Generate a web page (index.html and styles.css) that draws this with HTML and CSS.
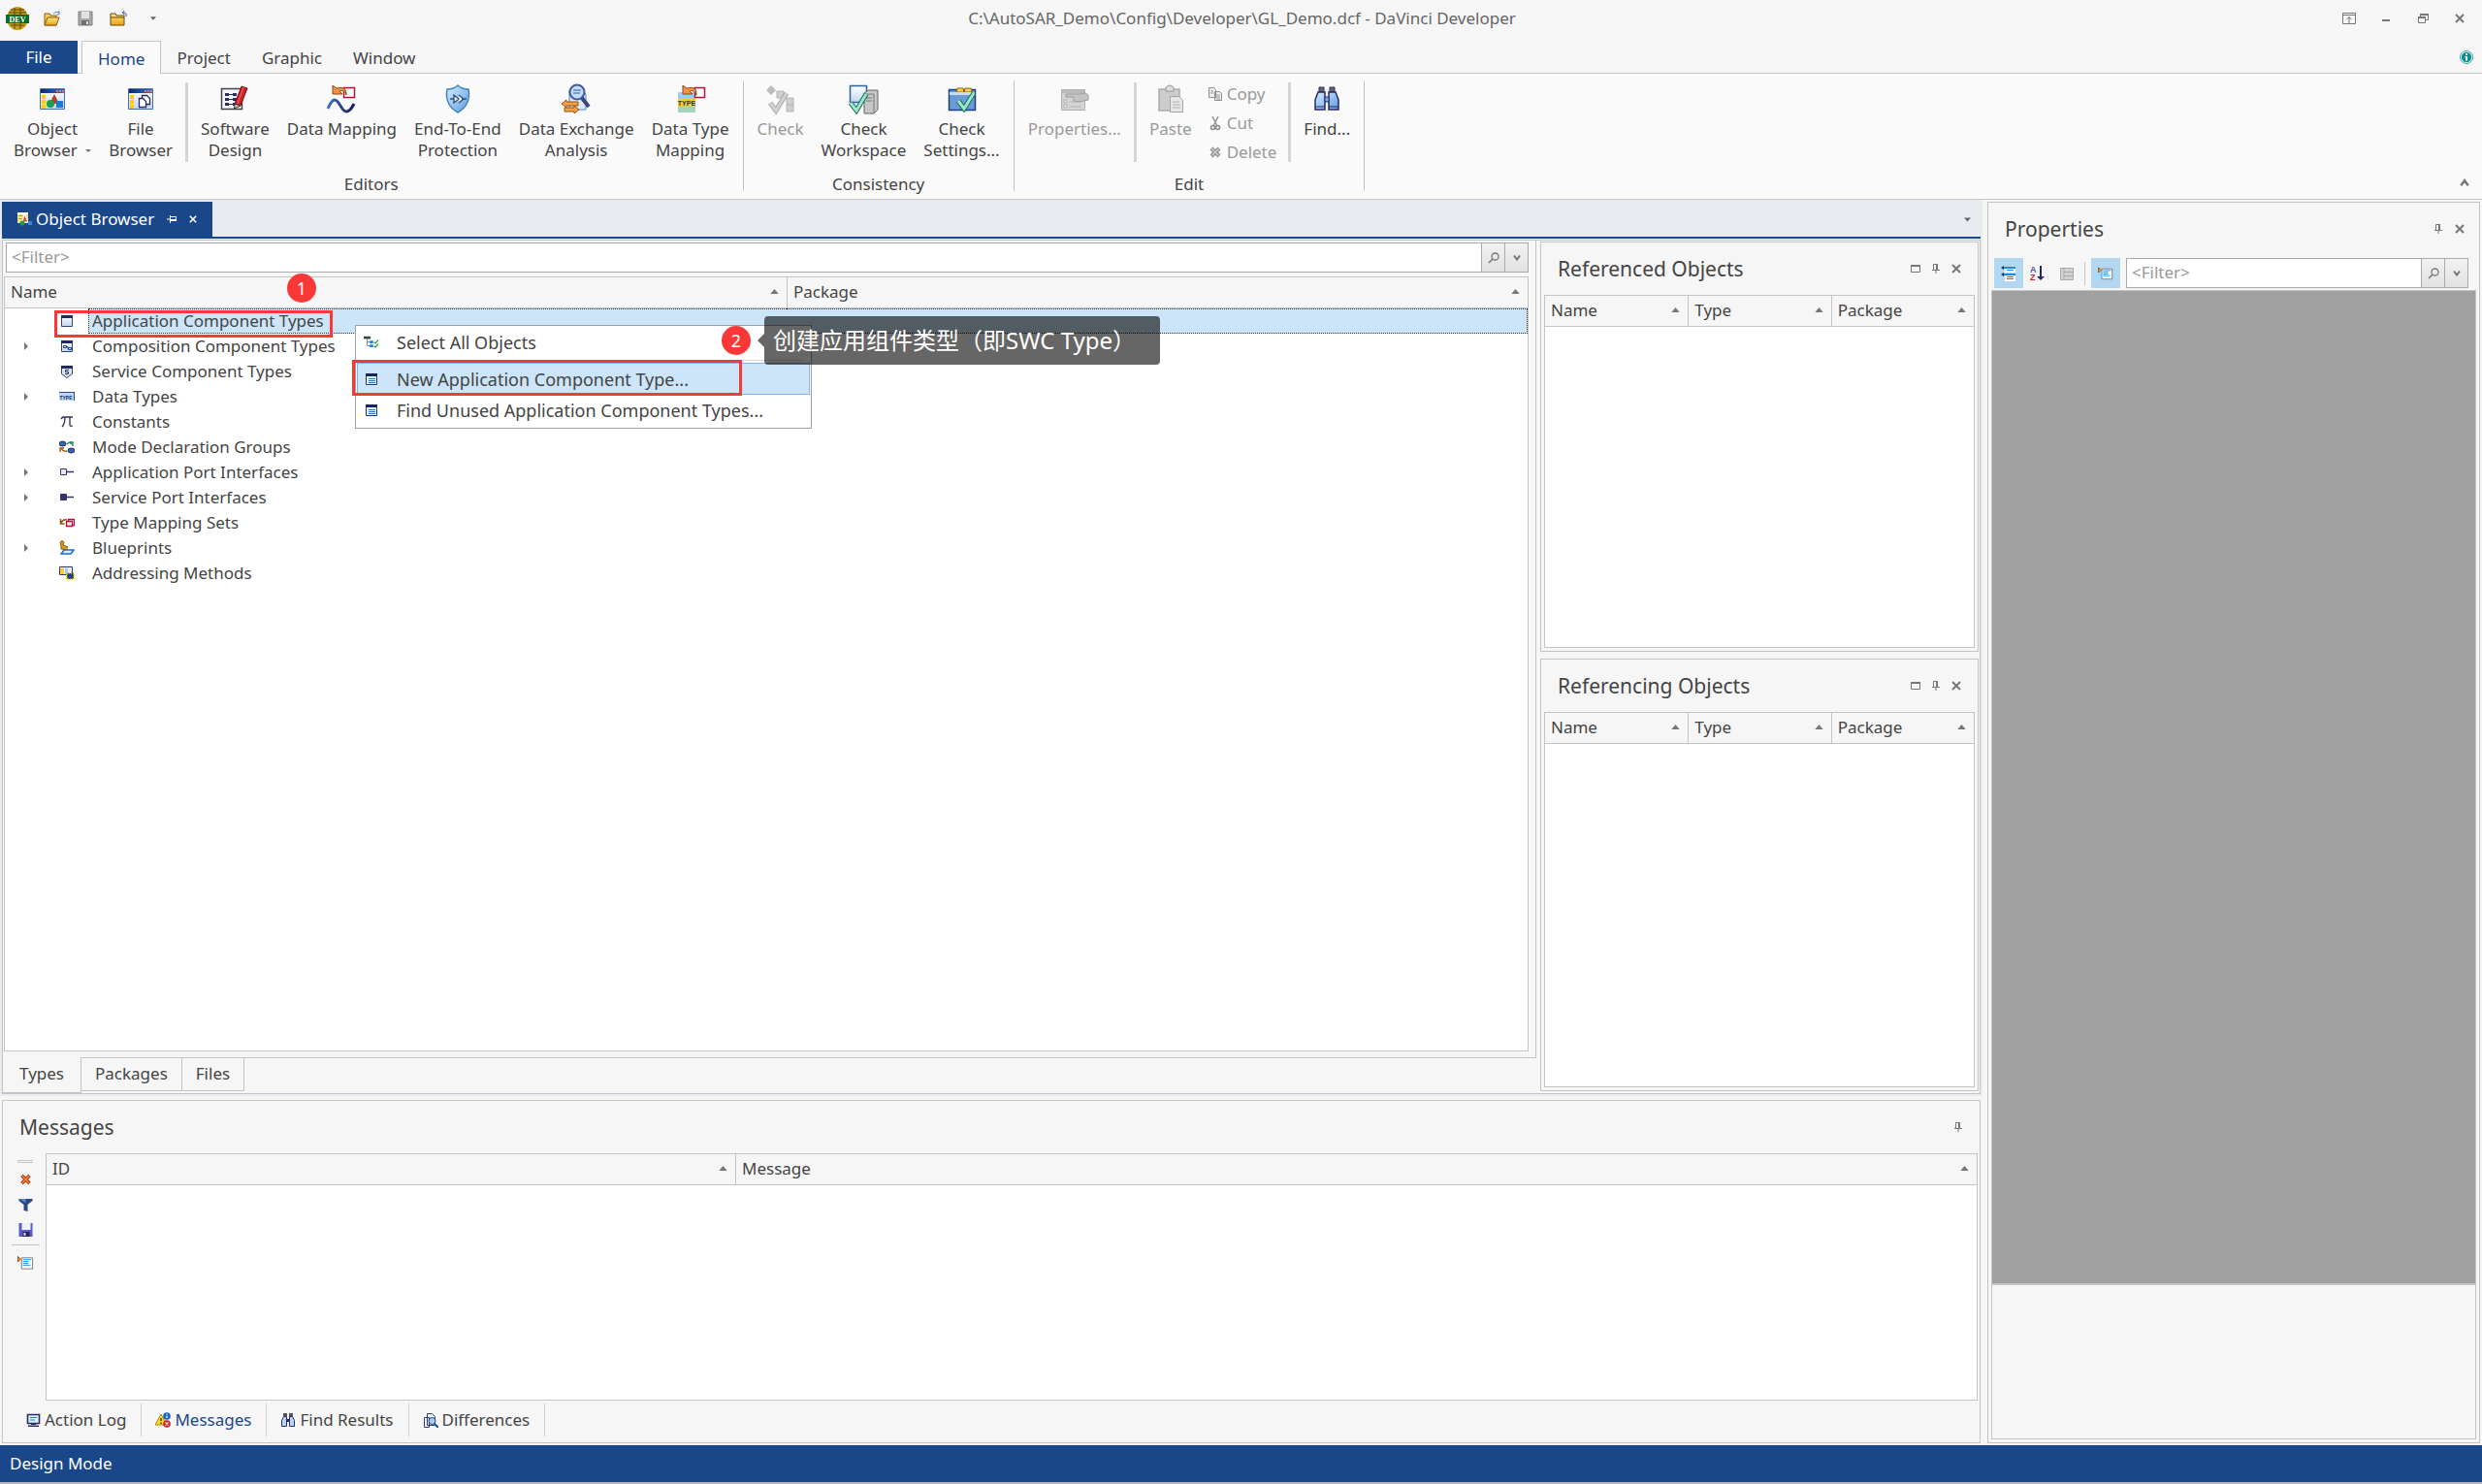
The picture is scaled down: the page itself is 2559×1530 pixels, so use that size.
FILE: index.html
```html
<!DOCTYPE html>
<html lang="en">

<head>
  <meta charset="utf-8">
  <meta name="viewport" content="width=device-width, initial-scale=1">
  <title>GL_Demo.dcf - DaVinci Developer</title>
  <link rel="stylesheet" href="styles.css">
</head>
<body>
  <svg class="sprite" aria-hidden="true">
    <defs>
      <linearGradient id="g-win" x1="0" y1="0" x2="0" y2="1"><stop offset="0" stop-color="#fff"/><stop offset="1" stop-color="#c4d4ee"/></linearGradient>
      <linearGradient id="g-bar" x1="0" y1="0" x2="1" y2="0"><stop offset="0" stop-color="#12256e"/><stop offset="1" stop-color="#2f74c8"/></linearGradient>
      <linearGradient id="g-gold" x1="0" y1="0" x2="0" y2="1"><stop offset="0" stop-color="#ffe48a"/><stop offset="1" stop-color="#e8a413"/></linearGradient>
      <linearGradient id="g-blue" x1="0" y1="0" x2="1" y2="1"><stop offset="0" stop-color="#d6ecff"/><stop offset="1" stop-color="#5e9be0"/></linearGradient>
      <linearGradient id="g-wave" x1="0" y1="0" x2="1" y2="0"><stop offset="0" stop-color="#3f6fc0"/><stop offset="1" stop-color="#1d1d5c"/></linearGradient>
    </defs>
    <symbol id="i-tri-up" viewBox="0 0 10 6"><path d="M5 0l5 6H0z" fill="#777"/></symbol>
    <symbol id="i-tri-down" viewBox="0 0 10 6"><path d="M0 0h10L5 6z" fill="#666"/></symbol>
    <symbol id="i-x" viewBox="0 0 10 10"><path d="M1 1l8 8M9 1L1 9" stroke="currentColor" stroke-width="2"/></symbol>
    <symbol id="i-pin" viewBox="0 0 8 10"><path d="M1.500 6V.500h4V6M0 6.500h8M4 7v3" stroke="currentColor" fill="none"/><path d="M4 0h2v6H4z" fill="currentColor"/></symbol>
    <symbol id="i-max" viewBox="0 0 10 10"><path d="M.500 1.500h9v7h-9z" fill="none" stroke="currentColor"/><path d="M0 1h10v2H0z" fill="currentColor"/></symbol>
    <symbol id="i-search" viewBox="0 0 12 12"><circle cx="7.500" cy="4.500" r="3.500" fill="none" stroke="#777" stroke-width="1.300"/><path d="M5 7L1 11" stroke="#777" stroke-width="1.600"/></symbol>
    <symbol id="i-chev" viewBox="0 0 8 8"><path d="M1 1.500l3 4 3-4" fill="none" stroke="#777" stroke-width="2"/></symbol>

    <symbol id="i-open" viewBox="0 0 18 16"><path d="M1 15V3h5l1 2h6v10z" fill="#f7cf5c" stroke="#8a5a12"/><path d="M1 15L4 7h12l-3 8z" fill="url(#g-gold)" stroke="#8a5a12"/><path d="M10 3q3-3 6-1M16 0v4h-3" fill="none" stroke="#5b84b8"/></symbol>
    <symbol id="i-save-gray" viewBox="0 0 16 16"><path d="M1 1h14v14H1z" fill="#a9a9a9" stroke="#7e7e7e"/><path d="M4 1h8v7H4z" fill="#e2e2e2"/><path d="M4 10h8v5H4z" fill="#6f6f6f"/><path d="M9 11h2v3H9z" fill="#ddd"/></symbol>
    <symbol id="i-up" viewBox="0 0 18 16"><path d="M1 15V3h5l1 2h8v10z" fill="url(#g-gold)" stroke="#6b4a10"/><path d="M1 7h14" stroke="#6b4a10"/><path d="M17 6q1-4-3-4M15.500 0L13 2l2.500 2" fill="none" stroke="#3b5b96"/></symbol>
    <symbol id="i-ribbonmin" viewBox="0 0 14 12"><path d="M.500.500h13v11H.500zM0 2.500h14M7 11V4.500M4.500 7L7 4.500 9.500 7" fill="none" stroke="#777"/></symbol>
    <symbol id="i-min" viewBox="0 0 14 12"><path d="M3 7h8v2H3z" fill="#777"/></symbol>
    <symbol id="i-restore" viewBox="0 0 14 12"><path d="M4.500 4V1.500h8v6H10M2.500 4.500h7v6h-7z" fill="none" stroke="#777"/><path d="M4 1h9v2H4zM2 4h8v2H2z" fill="#777"/></symbol>
    <symbol id="i-info" viewBox="0 0 14 14"><circle cx="7" cy="7" r="6.500" fill="#fff" stroke="#35a3a3"/><circle cx="7" cy="7" r="5.200" fill="#0f8c8c"/><path d="M6 3h2v2H6zM5.500 6H8v4.500H6V7h-.500z" fill="#fff"/></symbol>

    <symbol id="i-objects" viewBox="0 0 32 32"><path d="M3.500 5.500h25v21h-25z" fill="url(#g-win)" stroke="#3f6fb5"/><path d="M4 6h24v4H4z" fill="url(#g-bar)"/><path d="M20 7h2v2h-2zM23 7h2v2h-2zM26 7h2v2h-2z" fill="#f0725c"/><path d="M5 12h4v4H5zM5 17h4v4H5zM5 22h4v4H5z" fill="#ffc90e"/><path d="M18 11l5 10H13z" fill="#c0392b"/><circle cx="14" cy="21" r="4" fill="#1e9e4a"/><path d="M20 18h7v7h-7z" fill="#2478d0"/></symbol>
    <symbol id="i-files" viewBox="0 0 32 32"><path d="M3.500 5.500h25v21h-25z" fill="url(#g-win)" stroke="#3f6fb5"/><path d="M4 6h24v4H4z" fill="url(#g-bar)"/><path d="M20 7h2v2h-2zM23 7h2v2h-2zM26 7h2v2h-2z" fill="#f0725c"/><path d="M5 12h4v4H5zM5 17h4v4H5zM5 22h4v4H5z" fill="#ffc90e"/><path d="M17.500 12.500h5l3 3v6h-8z" fill="#fff" stroke="#2c2c62" stroke-width="1.300"/><path d="M14.500 15.500h4l3 3v6h-7z" fill="#fff" stroke="#2c2c62" stroke-width="1.300"/></symbol>
    <symbol id="i-design" viewBox="0 0 32 32"><path d="M2.500 5.500h21v21h-21z" fill="#f2f5fa" stroke="#444" stroke-width="1.500"/><path d="M6 10h4v3H6zM6 15h4v3H6zM6 20h4v3H6zM14 10h4v3h-4zM14 15h4v3h-4zM14 20h4v3h-4zM10 11h4v1h-4zM10 16h4v1h-4zM10 21h4v1h-4z" fill="#2c2c62"/><path d="M16 21l7-18 6 2-7 18z" fill="#d3202b" stroke="#701016"/><path d="M25 4l-6 17" stroke="#f07070"/><path d="M15.500 26l.500-5 6 2z" fill="#e8c090" stroke="#333"/></symbol>
    <symbol id="i-mapping" viewBox="0 0 32 32"><path d="M18.500 4.500h11v10h-11z" fill="#fbfbfb" stroke="#b3123d" stroke-width="1.500"/><path d="M7 2v9h10l-3-3q5-2 7 4 1-10-10-7z" fill="#f0924a" stroke="#8e4a14"/><path d="M2 26q4-9 7-9c5 0 7 12 12 12q4 0 8-8" fill="none" stroke="url(#g-wave)" stroke-width="3"/></symbol>
    <symbol id="i-shield" viewBox="0 0 32 32"><path d="M16 2q4 4 11 4 3 16-11 24Q2 22 5 6q7 0 11-4z" fill="url(#g-blue)" stroke="#3f86b8" stroke-width="1.500"/><path d="M8 16h4M20 16h5M12 12l5 4-5 4zM17 12l5 4-5 4" fill="#fff" stroke="#2f4f7a" stroke-width="1.300"/></symbol>
    <symbol id="i-exchange" viewBox="0 0 32 32"><path d="M9 7h13l4 4v16H9z" fill="#dceaf8" stroke="#4f86c6"/><circle cx="17" cy="9" r="7.500" fill="#bfe0fa" stroke="#49579a" stroke-width="2"/><path d="M13 7h8M13 10h7" stroke="#49579a"/><path d="M22 15l7 9" stroke="#39477f" stroke-width="4"/><path d="M1 21l5-4v2h12v4H6v2z" fill="#f7a146" stroke="#96520e"/><path d="M19 27l-5-4v2H4v4h10v2z" fill="#f7a146" stroke="#96520e"/></symbol>
    <symbol id="i-check-gray" viewBox="0 0 32 32"><path d="M6 2l5 5-5 5-5-5z" fill="#bdbdbd"/><path d="M12 8h7v7h-7zM22 15h7v14h-7z" fill="#cfcfcf" stroke="#b5b5b5"/><path d="M22 22h7" stroke="#b5b5b5"/><path d="M5 20l6 8L22 10" fill="none" stroke="#a9a9a9" stroke-width="5"/><path d="M5 20l6 8L22 10" fill="none" stroke="#d2d2d2" stroke-width="3"/></symbol>
    <symbol id="i-check-ws" viewBox="0 0 32 32"><path d="M2.500 2.500h17v17h-17z" fill="url(#g-win)" stroke="#2b65a8" stroke-width="1.500"/><path d="M17 10l4-3h10v20l-4 4H17z" fill="#c6c6c6" stroke="#666"/><path d="M17 11h10v19M19 15h6M19 18h6" fill="none" stroke="#777"/><path d="M3 20l6 8L19 11" fill="none" stroke="#1b6b5a" stroke-width="5"/><path d="M3 20l6 8L19 11" fill="none" stroke="#9be8c8" stroke-width="3"/></symbol>
    <symbol id="i-check-set" viewBox="0 0 32 32"><path d="M2.500 6.500h27v21h-27z" fill="#6b9bd4" stroke="#1d3f86" stroke-width="1.500"/><path d="M11 5h6l1 4h-8zM19 5h6l1 4h-8z" fill="#ffd24a" stroke="#8a6510"/><path d="M3 9h26v3H3z" fill="#c7dcf4"/><path d="M12 18l6 8L28 10" fill="none" stroke="#1b6b5a" stroke-width="5"/><path d="M12 18l6 8L28 10" fill="none" stroke="#9be8c8" stroke-width="3"/></symbol>
    <symbol id="i-props" viewBox="0 0 32 32"><path d="M2.500 6.500h24v21h-24z" fill="#d4d4d4" stroke="#b0b0b0"/><path d="M3 7h23v3H3z" fill="#bababa"/><path d="M5 17h3v3H5zM5 22h3v3H5z" fill="#f0f0f0" stroke="#b0b0b0"/><path d="M11 19h12M11 24h12" stroke="#b5b5b5"/><path d="M7 11h14l6-1 3 2v5l-10 2-5-1v-4H7z" fill="#c4c4c4" stroke="#9d9d9d"/></symbol>
    <symbol id="i-paste" viewBox="0 0 32 32"><path d="M4 6h21v22H4z" fill="#cdcdcd" stroke="#aaa" stroke-width="1.500"/><path d="M11 8V4q4-4 8 0v4z" fill="#dedede" stroke="#999"/><path d="M15.500 13.500h9l4 4v12h-13z" fill="#e7e7e7" stroke="#a3a3a3"/><path d="M18 19h7M18 22h8M18 25h8" stroke="#b0b0b0"/></symbol>
    <symbol id="i-copy" viewBox="0 0 16 16"><path d="M1.500 1.500h5l2 2v8h-7zM7.500 5.500h5l2 2v7h-7z" fill="#ededed" stroke="#8e8e8e"/><path d="M3 5h3M3 7h3M9 9h4M9 11h4M9 13h4" stroke="#999"/></symbol>
    <symbol id="i-cut" viewBox="0 0 16 16"><path d="M5 1l5 10M11 1L6 11" stroke="#999" stroke-width="1.600"/><circle cx="5.500" cy="12.500" r="2" fill="none" stroke="#888" stroke-width="1.500"/><circle cx="10.500" cy="12.500" r="2" fill="none" stroke="#888" stroke-width="1.500"/></symbol>
    <symbol id="i-delete" viewBox="0 0 16 16"><path d="M4 4l8 8M12 4l-8 8" stroke="#8e8e8e" stroke-width="4"/><path d="M4.500 4.500l7 7M11.500 4.500l-7 7" stroke="#ccc" stroke-width="1.500"/></symbol>
    <symbol id="i-find" viewBox="0 0 32 32"><path d="M8 4h5v5H8zM19 4h5v5h-5z" fill="#666" stroke="#2c2c62"/><path d="M7 9h7v18H4V17zM18 9h7l3 8v10H18z" fill="url(#g-blue)" stroke="#28286a" stroke-width="1.500"/><path d="M14 14h4v5h-4z" fill="#7fb1ee" stroke="#28286a"/><path d="M4 24h10M18 24h10" stroke="#28286a"/></symbol>

    <symbol id="i-tab" viewBox="0 0 16 16"><path d="M1 1h11v11H1z" fill="#f5e28a"/><path d="M1 1h11v2H1z" fill="#fff"/><path d="M2 4h4v1H2zM2 7h4v1H2z" fill="#c79a10"/><path d="M8 3l4 8H6z" fill="#e04b3c" stroke="#fff"/><circle cx="6" cy="12" r="2.500" fill="#1e9e4a"/><path d="M12 10h4v4h-4z" fill="#2e86e0"/></symbol>
    <symbol id="i-win" viewBox="0 0 16 16"><path d="M2.500 2.500h11v11h-11z" fill="url(#g-win)" stroke="#2f4478"/><path d="M2 2h12v3H2z" fill="#1c2b68"/></symbol>
    <symbol id="i-comp" viewBox="0 0 16 16"><path d="M2.500 2.500h11v11h-11z" fill="url(#g-win)" stroke="#2f4478"/><path d="M2 2h12v3H2z" fill="#1c2b68"/><path d="M4.500 7.500h3v2h-3zM9.500 9.500h3v2h-3zM7 8.500h2v2" fill="none" stroke="#1c3f9a"/></symbol>
    <symbol id="i-svc" viewBox="0 0 16 16"><path d="M2.500 2.500h11v8L8 14.500 2.500 10.500z" fill="#dde6f6" stroke="#2f4478"/><path d="M2 2h12v3H2z" fill="#1c2b68"/><path d="M10 6.500H6.500v2h3v2H6" fill="none" stroke="#1c2b68"/></symbol>
    <symbol id="i-pi" viewBox="0 0 16 16"><path d="M2 5q1-2 3-2h9M6 3q0 7-3 10M11 3v8q0 2 3 1" fill="none" stroke="#2c2c52" stroke-width="1.300"/></symbol>
    <symbol id="i-mode" viewBox="0 0 16 16"><ellipse cx="3.500" cy="4.500" rx="3.500" ry="2.500" fill="#3d63b0" stroke="#22305e"/><ellipse cx="12.500" cy="11.500" rx="3.500" ry="2.500" fill="#3d63b0" stroke="#22305e"/><path d="M8 5q2-3 6-2v4M11 4h3" fill="none" stroke="#2b8a5c" stroke-width="1.400"/><path d="M8 12q-4 1-6-3M1 13V9h4" fill="none" stroke="#a55c14" stroke-width="1.400"/></symbol>
    <symbol id="i-port" viewBox="0 0 16 16"><path d="M1.500 4.500h6v6h-6z" fill="#e6e6ee" stroke="#35356b"/><path d="M8 7.500h7" stroke="#35356b" stroke-width="1.500"/></symbol>
    <symbol id="i-port-svc" viewBox="0 0 16 16"><path d="M1.500 4.500h6v6h-6z" fill="#35356b" stroke="#35356b"/><path d="M8 7.500h7" stroke="#35356b" stroke-width="1.500"/></symbol>
    <symbol id="i-tms" viewBox="0 0 16 16"><path d="M9.500 6V4.500h6v6H14" fill="none" stroke="#b3123d" stroke-width="1.300"/><path d="M7.500 6.500h6v5h-6z" fill="#fde3ea" stroke="#b3123d" stroke-width="1.300"/><path d="M1.500 4v5h4M2 8q2-4 6-3" fill="none" stroke="#9a5410" stroke-width="1.500"/></symbol>
    <symbol id="i-blue" viewBox="0 0 16 16"><path d="M5 10h10l-3 4H2z" fill="#d9ebff" stroke="#1b6fd0" stroke-width="1.500"/><path d="M1 2q2-3 4 0l-1 3 5 2-2 3-5-1V6z" fill="#d99a1c" stroke="#875c0c"/></symbol>
    <symbol id="i-addr" viewBox="0 0 16 16"><path d="M.500 1.500h13v8H.500z" fill="#e8f0e8" stroke="#2c3a70"/><path d="M1 3h4v6H1z" fill="#ffc928"/><path d="M6 3h3v6H6z" fill="#9ccafc"/><path d="M8 8h7v6H8z" fill="#1d3f86" stroke="#e3b20f" stroke-width="1.500" stroke-dasharray="1 1"/></symbol>
    <symbol id="i-select" viewBox="0 0 18 16"><path d="M0 1h8v3H0z" fill="#444"/><path d="M4 4v8h3M4 7.500h3" fill="none" stroke="#777"/><path d="M7 6h4v3H7zM7 10.500h4v3H7z" fill="#1680d8"/><path d="M12 7.500l1.500 1.500L17 5M12 12l1.500 1.500L17 9.500" fill="none" stroke="#22a02a" stroke-width="1.300"/></symbol>
    <symbol id="i-list" viewBox="0 0 16 16"><path d="M2.500 2.500h11v11h-11z" fill="#e2efff" stroke="#243a78"/><path d="M2 2h12v3H2z" fill="#16246a"/><path d="M5 7.500h7M5 9.500h7M5 11.500h7" stroke="#1680d8"/></symbol>

    <symbol id="i-cat" viewBox="0 0 16 16"><path d="M3 1h12v2H3zM3 8h12v2H3z" fill="#0a8cf0"/><path d="M4 3h11v4H4zM4 10h11v6H4z" fill="#fff"/><path d="M6 4.500h7M6 11.500h7M6 13.500h7" stroke="#0a8cf0"/><path d="M3 0v4L0 2zM3 7v4L0 9z" fill="#1c2b68"/></symbol>
    <symbol id="i-grid" viewBox="0 0 16 16"><path d="M1.500 2.500h13v12h-13zM5 2v12M5 6.500h10M5 10.500h10" fill="#d2d2d2" stroke="#aaa"/></symbol>
    <symbol id="i-desc" viewBox="0 0 18 16"><path d="M4.500 2.500h12v12h-12z" fill="#fff" stroke="#777"/><path d="M6 4.500h9M6 6.500h6M6 8.500h6M6 10.500h8" stroke="#0a8cf0"/><path d="M.500 1v6l3-3z" fill="#f0a040" stroke="#8a4b10"/></symbol>
    <symbol id="i-clear" viewBox="0 0 16 16"><path d="M4 4l8 8M12 4l-8 8" stroke="#b02a10" stroke-width="3.500"/><path d="M4.500 4.500l7 7M11.500 4.500l-7 7" stroke="#ff8a3c" stroke-width="1.500"/></symbol>
    <symbol id="i-funnel" viewBox="0 0 16 16"><path d="M1 2h14v2l-5 4v7l-4-1V8L1 4z" fill="#2c4a86"/><path d="M2 2h6v4L3 3z" fill="#5f8ac8"/></symbol>
    <symbol id="i-save" viewBox="0 0 16 16"><path d="M1 1h14v14H1z" fill="#5a5ac8"/><path d="M4 1h9v7H4z" fill="#eef2ff"/><path d="M5 10h7v5H5z" fill="#26264f"/><path d="M6 11h2v3H6z" fill="#d9d9e9"/></symbol>
    <symbol id="i-log" viewBox="0 0 16 16"><path d="M2.500 2.500h12v9h-12z" fill="#dff0ff" stroke="#2c2c62" stroke-width="1.600"/><path d="M5 5.500h7M5 8h5" stroke="#1680d8"/><path d="M6 12h5v1H6zM3 13.500h11v1.500H3z" fill="#2c2c62"/></symbol>
    <symbol id="i-msg" viewBox="0 0 16 16"><path d="M6 2l6 11H0z" fill="#ffdc1e" stroke="#a8860c"/><path d="M6 6v3M6 10.500V12" stroke="#333" stroke-width="1.500"/><circle cx="12" cy="4" r="3.800" fill="#1266c2"/><path d="M12 3.500V6M12 1.500v1" stroke="#fff" stroke-width="1.300"/><circle cx="12" cy="12" r="3.800" fill="#c8222e"/><path d="M10.500 10.500l3 3M13.500 10.500l-3 3" stroke="#fff" stroke-width="1.200"/></symbol>
    <symbol id="i-find-small" viewBox="0 0 16 16"><path d="M3 1h4v3H3zM9 1h4v3H9z" fill="#555"/><path d="M3.500 4.500h3v10h-5v-6zM9.500 4.500h3l2 4v6h-5z" fill="#b5d6fa" stroke="#2c2c62"/><path d="M7 7h2v3H7z" fill="#2c2c62"/></symbol>
    <symbol id="i-diff" viewBox="0 0 16 16"><path d="M1.500 5.500h5v10h-5zM4.500 1.500h5l3 3v9h-8z" fill="#eaf3ff" stroke="#2c3a78"/><circle cx="9.500" cy="9" r="3.500" fill="#a9cdf5" stroke="#2c3a78"/><path d="M12 12l4 4" stroke="#1c4f9c" stroke-width="2"/></symbol>
  </svg>

  <header class="titlebar">
    <div class="quick">
      <svg class="app-icon" viewBox="0 0 24 24"><ellipse cx="12" cy="12" rx="11" ry="12" fill="#c39c18"/><path d="M5 3h14M3 6h18M9 1v7M15 1v7M5 19h14M9 17v6M15 17v6" stroke="#5c4a0a"/><path d="M0 8h24v9H0z" fill="#0c6b25"/><text x="12" y="15.500" text-anchor="middle" class="app-text">DEV</text></svg>
      <button aria-label="Open"><svg><use href="#i-open"/></svg></button>
      <button aria-label="Save"><svg><use href="#i-save-gray"/></svg></button>
      <button aria-label="Close workspace"><svg><use href="#i-up"/></svg></button>
      <button class="quick-more" aria-label="Customize"><svg><use href="#i-tri-down"/></svg></button>
    </div>
    <div class="title">C:\AutoSAR_Demo\Config\Developer\GL_Demo.dcf - DaVinci Developer</div>
    <div class="window-buttons">
      <button aria-label="Ribbon options"><svg><use href="#i-ribbonmin"/></svg></button>
      <button aria-label="Minimize"><svg><use href="#i-min"/></svg></button>
      <button aria-label="Restore"><svg><use href="#i-restore"/></svg></button>
      <button class="win-close" aria-label="Close"><svg><use href="#i-x"/></svg></button>
    </div>
  </header>

  <nav class="ribbon-tabs">
    <button class="file">File</button>
    <button class="active">Home</button>
    <button>Project</button>
    <button>Graphic</button>
    <button>Window</button>
    <button class="info" aria-label="About"><svg><use href="#i-info"/></svg></button>
  </nav>

  <div class="ribbon">
    <section class="group">
      <div class="items">
        <button><svg><use href="#i-objects"/></svg><span>Object<br>Browser <i class="drop"></i></span></button>
        <button><svg><use href="#i-files"/></svg><span>File<br>Browser</span></button>
        <span class="sep"></span>
        <button><svg><use href="#i-design"/></svg><span>Software<br>Design</span></button>
        <button><svg><use href="#i-mapping"/></svg><span>Data Mapping</span></button>
        <button><svg><use href="#i-shield"/></svg><span>End-To-End<br>Protection</span></button>
        <button><svg><use href="#i-exchange"/></svg><span>Data Exchange<br>Analysis</span></button>
        <button><svg viewBox="0 0 32 32"><path d="M3 9h18v8H3z" fill="#9ccafc"/><path d="M3 16h18v8H3z" fill="#ffc928"/><path d="M3 24h18v6H3z" fill="#a5d3bd"/><path d="M20.500 4.500h10v10h-10z" fill="#fbfbfb" stroke="#b3123d" stroke-width="1.500"/><path d="M8 2v9h10l-3-3q5-2 7 4 1-10-10-7z" fill="#f0924a" stroke="#8e4a14"/><text x="12" y="23" text-anchor="middle" class="type-text">TYPE</text></svg><span>Data Type<br>Mapping</span></button>
      </div>
      <div class="caption">Editors</div>
    </section>
    <section class="group">
      <div class="items">
        <button disabled><svg><use href="#i-check-gray"/></svg><span>Check</span></button>
        <button><svg><use href="#i-check-ws"/></svg><span>Check<br>Workspace</span></button>
        <button><svg><use href="#i-check-set"/></svg><span>Check<br>Settings...</span></button>
      </div>
      <div class="caption">Consistency</div>
    </section>
    <section class="group">
      <div class="items">
        <button disabled><svg><use href="#i-props"/></svg><span>Properties...</span></button>
        <span class="sep"></span>
        <button disabled><svg><use href="#i-paste"/></svg><span>Paste</span></button>
        <div class="small-items">
          <button disabled><svg><use href="#i-copy"/></svg>Copy</button>
          <button disabled><svg><use href="#i-cut"/></svg>Cut</button>
          <button disabled><svg><use href="#i-delete"/></svg>Delete</button>
        </div>
        <span class="sep"></span>
        <button><svg><use href="#i-find"/></svg><span>Find...</span></button>
      </div>
      <div class="caption">Edit</div>
    </section>
    <button class="collapse" aria-label="Collapse ribbon"><svg><use href="#i-chev"/></svg></button>
  </div>

  <main class="work">
    <div class="left">
      <div class="documents">
        <div class="doc-tabs">
          <div class="doc-tab">
            <svg class="icon"><use href="#i-tab"/></svg><span>Object Browser</span>
            <button class="pin" aria-label="Pin"><svg><use href="#i-pin"/></svg></button>
            <button class="close" aria-label="Close"><svg><use href="#i-x"/></svg></button>
          </div>
          <button class="doc-list" aria-label="Documents"><svg><use href="#i-tri-down"/></svg></button>
        </div>
        <div class="doc">
          <section class="browser">
            <div class="browser-body">
              <div class="filter">
                <input type="text" placeholder="&lt;Filter&gt;" aria-label="Filter objects">
                <button aria-label="Search"><svg class="search"><use href="#i-search"/></svg></button>
                <button aria-label="Filter history"><svg class="chev"><use href="#i-chev"/></svg></button>
              </div>
              <div class="grid tree">
                <table>
                  <thead>
                    <tr>
                      <th class="col-name"><div>Name<svg><use href="#i-tri-up"/></svg></div></th>
                      <th><div>Package<svg><use href="#i-tri-up"/></svg></div></th>
                    </tr>
                  </thead>
                  <tbody>
                    <tr class="selected"><td><div class="node"><i></i><svg><use href="#i-win"/></svg><span>Application Component Types</span></div></td><td></td></tr>
                    <tr><td><div class="node"><i class="more"></i><svg><use href="#i-comp"/></svg><span>Composition Component Types</span></div></td><td></td></tr>
                    <tr><td><div class="node"><i></i><svg><use href="#i-svc"/></svg><span>Service Component Types</span></div></td><td></td></tr>
                    <tr><td><div class="node"><i class="more"></i><svg viewBox="0 0 16 16"><path d="M0 3h16v9H0z" fill="#b9d7f8"/><path d="M0 3.500h16M15.500 3v9" stroke="#33488a"/><text x="7" y="10.500" text-anchor="middle" class="type-small">TYPE</text></svg><span>Data Types</span></div></td><td></td></tr>
                    <tr><td><div class="node"><i></i><svg><use href="#i-pi"/></svg><span>Constants</span></div></td><td></td></tr>
                    <tr><td><div class="node"><i></i><svg><use href="#i-mode"/></svg><span>Mode Declaration Groups</span></div></td><td></td></tr>
                    <tr><td><div class="node"><i class="more"></i><svg><use href="#i-port"/></svg><span>Application Port Interfaces</span></div></td><td></td></tr>
                    <tr><td><div class="node"><i class="more"></i><svg><use href="#i-port-svc"/></svg><span>Service Port Interfaces</span></div></td><td></td></tr>
                    <tr><td><div class="node"><i></i><svg><use href="#i-tms"/></svg><span>Type Mapping Sets</span></div></td><td></td></tr>
                    <tr><td><div class="node"><i class="more"></i><svg><use href="#i-blue"/></svg><span>Blueprints</span></div></td><td></td></tr>
                    <tr><td><div class="node"><i></i><svg><use href="#i-addr"/></svg><span>Addressing Methods</span></div></td><td></td></tr>
                  </tbody>
                </table>

                <div class="menu">
                  <button><svg><use href="#i-select"/></svg>Select All Objects</button>
                  <hr>
                  <button class="hot"><svg><use href="#i-list"/></svg>New Application Component Type...</button>
                  <button><svg><use href="#i-list"/></svg>Find Unused Application Component Types...</button>
                </div>
                <div class="mark mark-node"></div>
                <div class="mark mark-menu"></div>
                <div class="step step-1">1</div>
                <div class="step step-2">2</div>
                <div class="note" lang="zh">创建应用组件类型（即SWC Type）</div>
              </div>
            </div>
            <div class="browser-tabs">
              <button class="active">Types</button>
              <button>Packages</button>
              <button>Files</button>
              <span></span>
            </div>
          </section>

          <div class="side">
            <section class="panel referenced">
              <div class="panel-head">
                <h2>Referenced Objects</h2>
                <button aria-label="Maximize"><svg><use href="#i-max"/></svg></button>
                <button aria-label="Pin"><svg><use href="#i-pin"/></svg></button>
                <button aria-label="Close"><svg><use href="#i-x"/></svg></button>
              </div>
              <div class="grid">
                <table>
                  <thead>
                    <tr>
                      <th><div>Name<svg><use href="#i-tri-up"/></svg></div></th>
                      <th><div>Type<svg><use href="#i-tri-up"/></svg></div></th>
                      <th><div>Package<svg><use href="#i-tri-up"/></svg></div></th>
                    </tr>
                  </thead>
                </table>
              </div>
            </section>
            <section class="panel referencing">
              <div class="panel-head">
                <h2>Referencing Objects</h2>
                <button aria-label="Maximize"><svg><use href="#i-max"/></svg></button>
                <button aria-label="Pin"><svg><use href="#i-pin"/></svg></button>
                <button aria-label="Close"><svg><use href="#i-x"/></svg></button>
              </div>
              <div class="grid">
                <table>
                  <thead>
                    <tr>
                      <th><div>Name<svg><use href="#i-tri-up"/></svg></div></th>
                      <th><div>Type<svg><use href="#i-tri-up"/></svg></div></th>
                      <th><div>Package<svg><use href="#i-tri-up"/></svg></div></th>
                    </tr>
                  </thead>
                </table>
              </div>
            </section>
          </div>
        </div>
      </div>

      <section class="panel messages">
        <div class="panel-head">
          <h2>Messages</h2>
          <button aria-label="Pin"><svg><use href="#i-pin"/></svg></button>
        </div>
        <div class="messages-body">
          <div class="messages-tools">
            <span class="grip"></span>
            <button aria-label="Clear"><svg><use href="#i-clear"/></svg></button>
            <button aria-label="Filter"><svg><use href="#i-funnel"/></svg></button>
            <button aria-label="Save"><svg><use href="#i-save"/></svg></button>
            <span class="line"></span>
            <button aria-label="Details"><svg><use href="#i-desc"/></svg></button>
          </div>
          <div class="grid">
            <table>
              <thead>
                <tr>
                  <th class="col-id"><div>ID<svg><use href="#i-tri-up"/></svg></div></th>
                  <th><div>Message<svg><use href="#i-tri-up"/></svg></div></th>
                </tr>
              </thead>
            </table>
          </div>
        </div>
        <div class="panel-tabs">
          <button><svg><use href="#i-log"/></svg>Action Log</button>
          <button class="active"><svg><use href="#i-msg"/></svg>Messages</button>
          <button><svg><use href="#i-find-small"/></svg>Find Results</button>
          <button><svg><use href="#i-diff"/></svg>Differences</button>
        </div>
      </section>
    </div>

    <aside class="panel properties">
      <div class="panel-head">
        <h2>Properties</h2>
        <button aria-label="Pin"><svg><use href="#i-pin"/></svg></button>
        <button aria-label="Close"><svg><use href="#i-x"/></svg></button>
      </div>
      <div class="properties-tools">
        <button class="on" aria-label="Categorized"><svg><use href="#i-cat"/></svg></button>
        <button aria-label="Alphabetical"><svg viewBox="0 0 16 16"><text x="0" y="7" class="az-a">A</text><text x="0" y="15" class="az-z">Z</text><path d="M10 0h2v11h3l-4 4-4-4h3z" fill="#28286a"/></svg></button>
        <button disabled aria-label="Pages"><svg><use href="#i-grid"/></svg></button>
        <span class="line"></span>
        <button class="on" aria-label="Description"><svg><use href="#i-desc"/></svg></button>
        <div class="filter">
          <input type="text" placeholder="&lt;Filter&gt;" aria-label="Filter properties">
          <button aria-label="Search"><svg class="search"><use href="#i-search"/></svg></button>
          <button aria-label="Filter history"><svg class="chev"><use href="#i-chev"/></svg></button>
        </div>
      </div>
      <div class="properties-list"></div>
      <div class="properties-desc"></div>
    </aside>
  </main>

  <footer class="status">Design Mode</footer>
</body>
</html>
```
FILE: styles.css
```css
* {
  box-sizing: border-box;
}

body {
  margin: 0;
  height: 100vh;
  display: flex;
  flex-direction: column;
  background: #f6f6f6;
  color: #444;
  font-family: "Noto Sans", "Noto Sans CJK SC", sans-serif;
  font-size: 17px;
  line-height: 22px;
  overflow: hidden;
}

button {
  margin: 0;
  padding: 0;
  border: 0;
  background: none;
  color: inherit;
  font: inherit;
  white-space: nowrap;
}

button:disabled {
  color: #999;
}

svg {
  display: block;
  flex: none;
}

.sprite {
  position: absolute;
  width: 0;
  height: 0;
}

.app-text {
  font: bold 8px "Liberation Serif", serif;
  fill: #fff;
}

.type-text {
  font: bold 7px "Liberation Sans", sans-serif;
  fill: #333;
}

.type-small {
  font: bold 5px "Liberation Sans", sans-serif;
  fill: #1c2b68;
}

.az-a,
.az-z {
  font: bold 9px "Liberation Sans", sans-serif;
  fill: #4a5a9a;
}

.az-z {
  fill: #d3202b;
}

/* title bar */
.titlebar {
  height: 42px;
  padding: 0 4px 4px 6px;
  display: grid;
  grid-template-columns: 1fr auto 1fr;
  align-items: center;
  color: #666;
}

.quick,
.window-buttons {
  display: flex;
  align-items: center;
}

.quick .app-icon {
  width: 24px;
  height: 24px;
  margin-right: 15px;
}

.quick button {
  margin-right: 16px;
}

.quick button svg {
  width: 18px;
  height: 16px;
}

.quick .quick-more {
  margin-left: 8px;
}

.quick .quick-more svg {
  width: 6px;
  height: 4px;
}

.window-buttons {
  justify-content: flex-end;
}

.window-buttons button {
  width: 38px;
  display: flex;
  justify-content: center;
  color: #777;
}

.window-buttons svg {
  width: 14px;
  height: 12px;
}

.window-buttons .win-close svg {
  width: 10px;
  height: 10px;
}

/* ribbon */
.ribbon-tabs {
  height: 34px;
  display: flex;
  border-bottom: 1px solid #c6c6c6;
}

.ribbon-tabs button {
  height: 34px;
  padding: 2px 16px 0;
}

.ribbon-tabs .file {
  width: 80px;
  margin-right: 4px;
  padding-top: 0;
  background: #1a478a;
  color: #fff;
}

.ribbon-tabs .active {
  border: 1px solid #c6c6c6;
  border-bottom: 0;
  background: #fafafa;
  color: #1a478a;
}

.ribbon-tabs .info {
  margin-left: auto;
  padding: 0 9px;
}

.info svg {
  width: 14px;
  height: 14px;
}

.ribbon {
  height: 130px;
  padding: 7px 13px 8px 0;
  display: flex;
  background: #fafafa;
  border-bottom: 1px solid #c6c6c6;
}

.group {
  padding: 0 5px;
  display: flex;
  flex-direction: column;
  border-right: 1px solid #c6c6c6;
}

.items {
  height: 84px;
  margin-bottom: 17px;
  display: flex;
  align-items: flex-start;
}

.items > button {
  height: 84px;
  padding: 3px 9px 0;
  display: flex;
  flex-direction: column;
  align-items: center;
  gap: 4px;
}

.items > button > svg {
  width: 32px;
  height: 32px;
}

.items .sep {
  width: 3px;
  height: 82px;
  margin: 2px 4px 0;
  background: #d5d5d5;
}

.drop {
  display: inline-block;
  margin: 0 0 4px 4px;
  border: 3px solid transparent;
  border-top: 3px solid #777;
  border-bottom: 0;
}

.small-items {
  padding: 0 8px 0 7px;
}

.small-items button {
  height: 30px;
  padding-bottom: 2px;
  display: flex;
  align-items: center;
  gap: 4px;
}

.small-items svg {
  width: 16px;
  height: 16px;
}

.caption {
  line-height: 12px;
  text-align: center;
}

.collapse {
  margin: auto 0 4px auto;
  transform: rotate(180deg);
}

.collapse svg {
  width: 10px;
  height: 10px;
}

/* work area */
.work {
  flex: 1;
  min-height: 0;
  display: flex;
  gap: 5px;
  padding-right: 2px;
}

.left {
  flex: 1;
  min-width: 0;
  display: flex;
  flex-direction: column;
}

.documents {
  flex: 1;
  min-height: 0;
  padding: 2px;
  display: flex;
  flex-direction: column;
  background: #e8ebf0;
}

.doc-tabs {
  display: flex;
  justify-content: space-between;
  border-bottom: 2px solid #1a478a;
}

.doc-tab {
  height: 36px;
  padding: 0 16px 0 15px;
  display: flex;
  align-items: center;
  background: #1a478a;
  color: #fff;
}

.doc-tab .icon {
  width: 16px;
  height: 16px;
  margin-right: 4px;
}

.doc-tab .pin {
  margin-left: 14px;
  transform: rotate(90deg);
}

.doc-tab .close {
  margin-left: 14px;
}

.doc-tab button svg {
  width: 8px;
  height: 10px;
}

.doc-list {
  padding: 0 10px;
}

.doc-list svg {
  width: 7px;
  height: 5px;
}

.doc {
  flex: 1;
  min-height: 0;
  margin-top: 1px;
  display: flex;
  gap: 4px;
  background: #f6f6f6;
  border: 1px solid #c4c4c4;
}

.browser {
  flex: 1;
  min-width: 0;
  display: flex;
  flex-direction: column;
}

.browser-body {
  flex: 1;
  min-height: 0;
  padding: 2px 7px 6px 1px;
  display: flex;
  flex-direction: column;
  gap: 4px;
  border-right: 1px solid #c4c4c4;
}

.filter {
  height: 31px;
  display: flex;
  background: #fff;
  border: 1px solid #aaa;
}

.browser-body .filter {
  margin-left: 2px;
}

.filter input {
  flex: 1;
  min-width: 0;
  padding: 0 5px 2px;
  border: 0;
  background: none;
  font: inherit;
  color: #444;
}

.filter input::placeholder {
  color: #999;
}

.filter button {
  width: 24px;
  display: flex;
  align-items: center;
  justify-content: center;
  border-left: 1px solid #aaa;
  background: linear-gradient(#f2f2f2, #e2e2e2);
}

.filter .search {
  width: 12px;
  height: 12px;
}

.filter .chev {
  width: 8px;
  height: 8px;
}

.grid {
  flex: 1;
  min-height: 0;
  background: #fff;
  border: 1px solid #c4c4c4;
}

.grid table {
  width: 100%;
  table-layout: fixed;
  border-spacing: 0;
}

.grid th {
  height: 32px;
  padding: 0 8px 2px 6px;
  background: #f6f6f6;
  border-bottom: 1px solid #c4c4c4;
  font-weight: normal;
  text-align: left;
}

.grid th + th {
  border-left: 1px solid #c4c4c4;
}

.grid th div {
  display: flex;
  align-items: center;
  justify-content: space-between;
}

.grid th svg {
  width: 9px;
  height: 5px;
}

.grid .col-name {
  width: 806px;
}

.grid .col-id {
  width: 710px;
}

/* object tree */
.tree {
  position: relative;
}

.tree td {
  height: 26px;
  padding: 0;
}

.node {
  height: 26px;
  display: flex;
  align-items: center;
}

.node i {
  width: 56px;
  flex: none;
}

.node .more::before {
  content: "";
  display: block;
  width: 0;
  margin-left: 20px;
  border: 4px solid transparent;
  border-left-color: #777;
  border-right: 0;
}

.node svg {
  width: 16px;
  height: 16px;
  margin-right: 14px;
}

.node span {
  flex: 1;
  height: 26px;
  padding-left: 4px;
  line-height: 26px;
}

.selected .node span,
.selected td + td {
  background: #cce5f8;
  border: 1px dotted #333;
  border-width: 1px 0;
  line-height: 24px;
}

.selected .node span {
  border-left-width: 1px;
  padding-left: 3px;
}

.selected td + td {
  border-right-width: 1px;
}

/* context menu and step marks over the tree */
.menu {
  position: absolute;
  left: 361px;
  top: 49px;
  width: 471px;
  padding: 1px;
  background: #fff;
  border: 1px solid #a0a0a0;
  font-size: 18px;
}

.menu button {
  width: 100%;
  height: 33px;
  padding: 0 0 1px 7px;
  display: flex;
  align-items: center;
  gap: 18px;
}

.menu svg {
  width: 16px;
  height: 16px;
}

.menu hr {
  margin: 1px 8px 2px 38px;
  border: 0;
  border-top: 1px solid #ddd;
}

.menu .hot {
  padding: 0 0 0 6px;
  background: #cce5f8;
  border: 1px solid #7eb4ea;
}

.mark {
  position: absolute;
  border: 3px solid #fb3838;
}

.mark-node {
  left: 51px;
  top: 34px;
  width: 287px;
  height: 28px;
}

.mark-menu {
  left: 358px;
  top: 85px;
  width: 402px;
  height: 37px;
}

.step {
  position: absolute;
  width: 30px;
  height: 30px;
  border-radius: 50%;
  background: #fb3838;
  color: #fff;
  font-size: 18px;
  line-height: 30px;
  text-align: center;
}

.step-1 {
  left: 291px;
  top: -4px;
}

.step-2 {
  left: 739px;
  top: 50px;
}

.note {
  position: absolute;
  left: 783px;
  top: 40px;
  width: 408px;
  height: 50px;
  padding-left: 9px;
  border-radius: 4px;
  background: rgba(0, 0, 0, 0.6);
  color: #fff;
  font-size: 24px;
  line-height: 50px;
  white-space: nowrap;
}

.note::before {
  content: "";
  position: absolute;
  left: -7px;
  top: 18px;
  border: 7px solid transparent;
  border-left: 0;
  border-right-color: rgba(0, 0, 0, 0.6);
}

.browser-tabs {
  height: 37px;
  display: flex;
  align-items: flex-start;
}

.browser-tabs button {
  height: 35px;
  padding: 0 14px 2px;
  border: 1px solid #c4c4c4;
  border-left: 0;
}

.browser-tabs .active {
  height: 37px;
  width: 81px;
  border-top: 0;
}

.browser-tabs span {
  flex: 1;
  border-top: 1px solid #c4c4c4;
}

/* docked panels */
.side {
  width: 453px;
  padding: 1px 1px 2px 0;
  display: flex;
  flex-direction: column;
  gap: 7px;
}

.panel {
  display: flex;
  flex-direction: column;
  background: #f6f6f6;
  border: 1px solid #c4c4c4;
}

.referenced {
  flex: 423;
}

.referencing {
  flex: 446;
}

.panel-head {
  height: 54px;
  padding: 0 17px 1px;
  display: flex;
  align-items: center;
  gap: 11px;
  color: #777;
}

.panel-head h2 {
  flex: 1;
  margin: 0;
  color: #444;
  font-size: 21px;
  font-weight: normal;
  line-height: 28px;
}

.panel-head svg {
  width: 10px;
  height: 10px;
}

.side .grid {
  margin: 0 3px 3px;
}

.messages {
  height: 354px;
  margin: 4px 2px 2px;
}

.messages-body {
  flex: 1;
  display: flex;
  padding-right: 2px;
}

.messages-tools {
  width: 44px;
  padding: 7px 7px 0 9px;
  display: flex;
  flex-direction: column;
  align-items: center;
}

.messages-tools .grip {
  width: 16px;
  height: 3px;
  margin-bottom: 4px;
  border: 1px solid #c4c4c4;
  border-width: 1px 0;
}

.messages-tools .line {
  width: 29px;
  height: 1px;
  margin: 2px 0 5px;
  background: #c4c4c4;
}

.messages-tools button {
  height: 26px;
  display: flex;
  align-items: center;
}

.messages-tools svg {
  width: 17px;
  height: 16px;
}

.panel-tabs {
  height: 43px;
  padding: 3px 0 6px 9px;
  display: flex;
}

.panel-tabs button {
  padding: 0 15px 0 14px;
  display: flex;
  align-items: center;
  gap: 4px;
  border-right: 1px solid #d0d0d0;
}

.panel-tabs svg {
  width: 16px;
  height: 16px;
}

.panel-tabs .active {
  color: #1a478a;
}

/* properties */
.properties {
  width: 508px;
  margin: 2px 0;
  padding: 0 3px 3px;
}

.properties .panel-head {
  height: 57px;
  padding: 0 12px 3px 14px;
  gap: 12px;
}

.properties-tools {
  height: 33px;
  padding: 0 8px 2px 3px;
  display: flex;
  align-items: center;
}

.properties-tools > button {
  width: 30px;
  height: 31px;
  display: flex;
  align-items: center;
  justify-content: center;
}

.properties-tools .on {
  background: #b3d7f0;
}

.properties-tools > button svg {
  width: 16px;
  height: 16px;
}

.properties-tools .line {
  width: 1px;
  height: 24px;
  margin: 0 6px 0 3px;
  background: #c4c4c4;
}

.properties-tools .filter {
  flex: 1;
  margin-left: 6px;
}

.properties-list {
  flex: 1;
  background: #a0a0a0;
  border: 1px solid #c4c4c4;
}

.properties-desc {
  height: 160px;
  border: 1px solid #c4c4c4;
}

.status {
  height: 40px;
  padding: 0 10px;
  background: #1a478a;
  border-bottom: 2px solid #b4b8c4;
  color: #fff;
  line-height: 38px;
}
```
